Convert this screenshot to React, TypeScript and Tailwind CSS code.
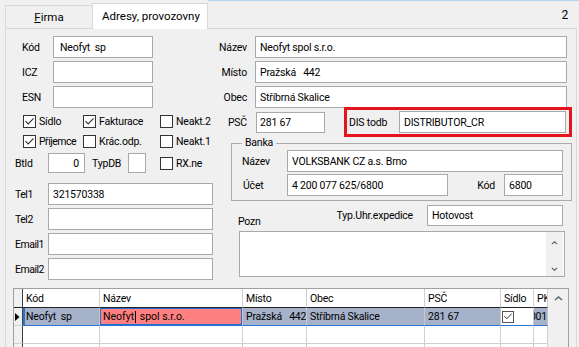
import type { ReactNode } from "react";

type FieldProps = { className?: string; value?: string; pad?: string };

const Field = ({ className = "", value = "", pad = "pl-[4px]" }: FieldProps) => (
  <div
    className={`${className} ${pad} flex items-center shrink-0 bg-white border border-[#a9a9a9] whitespace-pre overflow-hidden`}
  >
    {value}
  </div>
);

const Check = ({ checked = false, grid = false }: { checked?: boolean; grid?: boolean }) => (
  <span
    className={`${grid ? "w-[12px] h-[12px] border-[#555]" : "w-[13px] h-[13px] border-[#333]"} shrink-0 bg-white border flex items-center justify-center`}
  >
    {checked && (
      <svg width="11" height="11" viewBox="0 0 11 11">
        <path d="M1.5 5.2 L4.2 8 L9.6 2.4" fill="none" stroke="#333" strokeWidth="1.1" />
      </svg>
    )}
  </span>
);

const CheckItem = ({ label, checked, w, tight = false }: { label: string; checked?: boolean; w: string; tight?: boolean }) => (
  <div className={`${w} flex items-center gap-[3px] shrink-0 whitespace-nowrap`}>
    <Check checked={checked} />
    <span className={tight ? "tracking-[-0.5px]" : ""}>{label}</span>
  </div>
);

const Chevron = ({ down = false, size = "w-[9px] h-[5px]" }: { down?: boolean; size?: string }) => (
  <svg className={size} viewBox="0 0 9 5">
    <path
      d={down ? "M1 1 L4.5 4 L8 1" : "M1 4 L4.5 1 L8 4"}
      fill="none"
      stroke="#606060"
      strokeWidth="1.4"
    />
  </svg>
);

const LeftRow = ({ label, children, mt = "mt-[3px]" }: { label: string; children: ReactNode; mt?: string }) => (
  <div className={`flex items-center h-[22px] ${mt}`}>
    <span className="w-[42px] pl-[9px] shrink-0 whitespace-nowrap tracking-[-0.5px]">{label}</span>
    {children}
  </div>
);

const RightRow = ({ label, value, mt = "mt-[3px]" }: { label: string; value: string; mt?: string }) => (
  <div className={`flex items-center h-[22px] ${mt}`}>
    <span className="w-[31px] text-right shrink-0">{label}</span>
    <Field className="ml-[8px] w-[312px] h-[22px]" value={value} />
  </div>
);

const cols = "grid grid-cols-[9px_77px_143px_64px_118px_76px_33px_14px]";
const cell = "h-[18px] flex items-center pl-[3px] border-r border-b whitespace-pre overflow-hidden";
const sel = "bg-[#a6b2ca] border-b-[#2a72d4] border-r-[#c8c8c8]";

const App = () => {
  return (
    <div className="w-[579px] h-[347px] overflow-hidden bg-[#f0f0f0] text-[10.5px] leading-[13px] tracking-[-0.2px] text-black font-['Roboto',sans-serif]">
      {/* tab strip */}
      <div className="flex items-end h-[28px] pl-[5px]">
        <div className="w-[88px] h-[23px] border border-b-0 border-[#d9d9d9] bg-[#f0f0f0] flex items-center justify-center text-[11.5px] tracking-normal">
          <span>
            <span className="underline">F</span>irma
          </span>
        </div>
        <div className="relative z-10 -mb-px -ml-px w-[116px] h-[26px] border border-b-0 border-[#d9d9d9] bg-white flex items-center pl-[9px] text-[11.5px] tracking-normal whitespace-nowrap">
          Adresy, provozovny
        </div>
        <div className="flex-1 self-stretch border-t border-[#b5d5f2] flex items-center justify-end pr-[11px] pt-[2px] text-[12px]">
          2
        </div>
      </div>

      {/* page */}
      <div className="ml-[5px] w-[572px] h-[330px] border border-[#d9d9d9] flex flex-col">
        <div className="flex items-start">
          {/* left column */}
          <div className="w-[210px] shrink-0 flex flex-col">
            <div className="flex items-center h-[22px] mt-[7px]">
              <span className="w-[47px] pl-[16px] shrink-0">Kód</span>
              <Field className="w-[100px] h-[22px]" value="Neofyt  sp" pad="pl-[6px]" />
            </div>
            <div className="flex items-center h-[22px] mt-[3px]">
              <span className="w-[47px] pl-[16px] shrink-0">ICZ</span>
              <Field className="w-[100px] h-[22px]" />
            </div>
            <div className="flex items-center h-[22px] mt-[3px]">
              <span className="w-[47px] pl-[16px] shrink-0">ESN</span>
              <Field className="w-[100px] h-[22px]" />
            </div>

            <div className="flex items-center h-[13px] mt-[7px] pl-[17px]">
              <CheckItem w="w-[60px]" label="Sídlo" checked />
              <CheckItem w="w-[77px]" label="Fakturace" checked />
              <CheckItem w="w-[50px]" label="Neakt.2" />
            </div>
            <div className="flex items-center h-[13px] mt-[7px] pl-[17px]">
              <CheckItem w="w-[60px]" label="Příjemce" checked tight />
              <CheckItem w="w-[77px]" label="Krác.odp." />
              <CheckItem w="w-[50px]" label="Neakt.1" />
            </div>

            <div className="flex items-center h-[20px] mt-[5px]">
              <span className="w-[42px] pl-[9px] shrink-0">Btld</span>
              <Field className="w-[37px] h-[20px] justify-end" value="0" pad="pr-[5px]" />
              <span className="w-[43px] pl-[7px] shrink-0 whitespace-nowrap">TypDB</span>
              <Field className="w-[18px] h-[20px]" />
              <div className="ml-[14px] flex items-center gap-[3px]">
                <Check />
                <span>RX.ne</span>
              </div>
            </div>

            <LeftRow label="Tel1" mt="mt-[10px]">
              <Field className="w-[165px] h-[22px]" value="321570338" />
            </LeftRow>
            <LeftRow label="Tel2">
              <Field className="w-[165px] h-[22px]" />
            </LeftRow>
            <LeftRow label="Email1">
              <Field className="w-[165px] h-[22px]" />
            </LeftRow>
            <LeftRow label="Email2">
              <Field className="w-[165px] h-[22px]" />
            </LeftRow>
          </div>

          {/* right column */}
          <div className="w-[359px] shrink-0 flex flex-col">
            <RightRow label="Název" value="Neofyt spol s.r.o." mt="mt-[7px]" />
            <RightRow label="Místo" value="Pražská   442" />
            <RightRow label="Obec" value="Stříbrná Skalice" />

            <div className="flex items-center h-[30px] -mt-px">
              <span className="w-[31px] text-right shrink-0">PSČ</span>
              <Field className="ml-[9px] w-[69px] h-[21px]" value="281 67" pad="pl-[3px]" />
              <div className="ml-[19px] w-[228px] h-[30px] border-[3px] border-[#e5131d] flex items-center">
                <span className="w-[52px] pl-[2px] shrink-0 whitespace-nowrap">DIS todb</span>
                <Field className="w-[167px] h-[22px]" value="DISTRIBUTOR_CR" />
              </div>
            </div>

            <fieldset className="ml-[15px] w-[341px] border border-[#ababab] pb-[4px]">
              <legend className="ml-[10px] px-[3px] leading-[12px]">Banka</legend>
              <div className="flex items-center h-[22px] mt-px">
                <span className="w-[55px] pl-[10px] shrink-0">Název</span>
                <Field className="w-[276px] h-[22px]" value="VOLKSBANK CZ a.s. Brno" />
              </div>
              <div className="flex items-center h-[22px] mt-[2px]">
                <span className="w-[55px] pl-[11px] shrink-0">Účet</span>
                <Field className="w-[161px] h-[22px]" value="4 200 077 625/6800" />
                <span className="w-[56px] text-right pr-[9px] shrink-0">Kód</span>
                <Field className="w-[59px] h-[22px]" value="6800" />
              </div>
            </fieldset>

            <div className="flex items-end h-[21px] mt-[4px]">
              <span className="ml-[22px] -mb-[2px]">Pozn</span>
              <span className="ml-auto mb-[4px] whitespace-nowrap">Typ.Uhr.expedice</span>
              <Field className="ml-[14px] mr-[12px] w-[136px] h-[21px]" value="Hotovost" />
            </div>

            <div className="mt-[5px] ml-[23px] w-[326px] h-[46px] border border-[#a9a9a9] bg-white flex justify-end">
              <div className="w-[17px] mr-px bg-[#f0f0f0] flex flex-col items-center justify-between pt-[9px] pb-[5px]">
                <Chevron size="w-[7px] h-[4px]" />
                <Chevron down size="w-[7px] h-[4px]" />
              </div>
            </div>
          </div>
        </div>

        {/* grid */}
        <div className="mt-[8px] ml-[7px] w-[556px] flex border-t border-l border-r border-[#a0a0a0] bg-white">
          <div className="w-[534px] shrink-0">
            <div className={cols}>
              {/* header */}
              <div className="h-[19px] bg-[#f0f0f0] border-r border-r-[#404040] border-b border-b-[#222]" />
              {["Kód", "Název", "Místo", "Obec", "PSČ", "Sídlo", "PK"].map((h) => (
                <div
                  key={h}
                  className="h-[19px] flex items-center pl-[3px] border-r border-r-[#d0d0d0] border-b border-b-[#222] overflow-hidden whitespace-nowrap"
                >
                  {h}
                </div>
              ))}

              {/* selected row */}
              <div className="h-[18px] bg-[#f0f0f0] border-r border-r-[#404040] border-b border-b-[#d0d0d0] flex items-center pl-px">
                <svg width="5" height="8" viewBox="0 0 5 8">
                  <path d="M0 0 L4.5 4 L0 8 Z" fill="#000" />
                </svg>
              </div>
              <div className={`${cell} ${sel} shadow-[inset_2px_0_0_#2a72d4]`}>Neofyt  sp</div>
              <div className="h-[18px] flex items-center pl-[3px] bg-[#ff8080] border-r border-b border-r-[#c8c8c8] border-b-[#2a72d4] shadow-[inset_0_0_0_1px_#1f6fd6] text-[10.5px] tracking-normal whitespace-pre overflow-hidden">
                Neofyt
                <span className="w-px h-[12px] bg-black mx-[1px]" />
                {" spol s.r.o."}
              </div>
              <div className={`${cell} ${sel}`}>Pražská   442</div>
              <div className={`${cell} ${sel}`}>Stříbrná Skalice</div>
              <div className={`${cell} ${sel}`}>281 67</div>
              <div className="h-[18px] flex items-center pl-[1px] bg-white border-r border-b border-r-[#c8c8c8] border-b-[#2a72d4]">
                <Check checked grid />
              </div>
              <div className={`${cell} ${sel} justify-end pl-0 border-r-[#2a72d4]`}>001</div>

              {/* empty rows */}
              {[0, 1].map((r) => (
                <div key={r} className="contents">
                  <div className="h-[18px] bg-[#f0f0f0] border-r border-r-[#404040] border-b border-b-[#d0d0d0]" />
                  {[0, 1, 2, 3, 4, 5, 6].map((c) => (
                    <div key={c} className="h-[18px] border-r border-b border-[#d0d0d0]" />
                  ))}
                </div>
              ))}
            </div>
          </div>
          <div className="w-[20px] shrink-0 bg-[#f0f0f0] flex flex-col items-center pt-[7px] h-[60px]">
            <Chevron />
          </div>
        </div>
      </div>
    </div>
  );
};

export default App;
